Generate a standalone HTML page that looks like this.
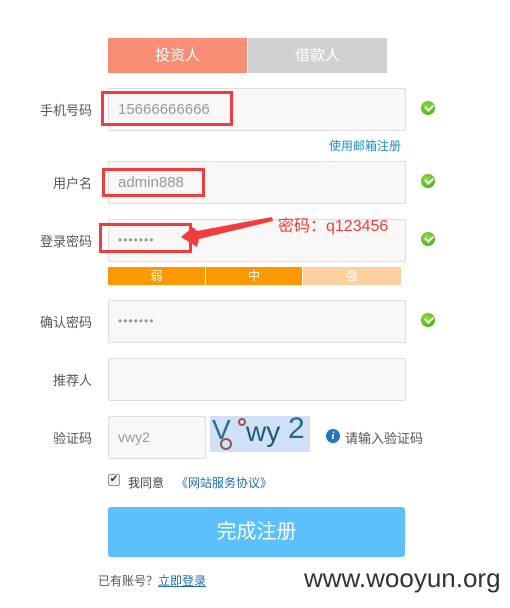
<!DOCTYPE html>
<html><head><meta charset="utf-8"><style>
*{margin:0;padding:0;box-sizing:border-box}
body{width:510px;height:608px;background:#fff;position:relative;overflow:hidden;font-family:"Liberation Sans","Noto Sans CJK SC",sans-serif;color:#555}
.a{position:absolute}
.tab{top:38px;height:35px;width:139px;color:#fff;font-size:15px;text-align:center;line-height:35px}
.lab{left:0;width:92px;text-align:right;font-size:13px;color:#555}
.inp{left:108px;width:298px;height:43px;background:#f9f8f6;border:1px solid #ddd;border-radius:2px;font-size:15px;color:#999;padding-left:9px;line-height:41px}
.rb{border:3px solid #f03c3c}
.ok{left:421px;width:14px;height:14px;border-radius:50%;background:radial-gradient(circle at 40% 35%,#8fdc3a,#3aa512);}
.ok:after{content:"";position:absolute;left:3.5px;top:3px;width:6px;height:3.5px;border-left:2px solid #fff;border-bottom:2px solid #fff;transform:rotate(-45deg)}
.bar{top:267px;height:18px;color:#fff;font-size:12px;text-align:center;line-height:18px}
</style></head><body>
<div class="a tab" style="left:108px;background:#f98e74">投资人</div>
<div class="a tab" style="left:248px;background:#d0d0d0">借款人</div>

<div class="a lab" style="top:100px">手机号码</div>
<div class="a inp" style="top:88px">15666666666</div>
<div class="a rb" style="left:101px;top:91px;width:132px;height:35px"></div>
<div class="a ok" style="top:101px"></div>
<div class="a" style="left:329px;top:137px;font-size:12px;color:#1a8fd1">使用邮箱注册</div>

<div class="a lab" style="top:173px">用户名</div>
<div class="a inp" style="top:161px">admin888</div>
<div class="a rb" style="left:102px;top:168px;width:103px;height:29px"></div>
<div class="a ok" style="top:174px"></div>

<div class="a lab" style="top:231px">登录密码</div>
<div class="a inp" style="top:219px;letter-spacing:1px;font-size:12px">•••••••</div>
<div class="a rb" style="left:99px;top:223px;width:93px;height:30px"></div>
<div class="a ok" style="top:232px"></div>
<svg class="a" style="left:0;top:0" width="510" height="608"><polygon points="272,217 273,221 199,239 197,247 181,237 193,227 197,231" fill="#f03c3c"/></svg>
<div class="a" style="left:278px;top:212px;font-size:16px;color:#f03c3c">密码：q123456</div>
<div class="a bar" style="left:108px;width:97px;background:#fe9800">弱</div>
<div class="a bar" style="left:206px;width:96px;background:#fe9800">中</div>
<div class="a bar" style="left:303px;width:98px;background:#fdd09e">强</div>

<div class="a lab" style="top:312px">确认密码</div>
<div class="a inp" style="top:300px;letter-spacing:1px;font-size:12px">•••••••</div>
<div class="a ok" style="top:313px"></div>

<div class="a lab" style="top:370px">推荐人</div>
<div class="a inp" style="top:358px"></div>

<div class="a lab" style="top:428px">验证码</div>
<div class="a inp" style="top:416px;width:98px;font-size:14px">vwy2</div>
<div class="a" style="left:210px;top:416px;width:100px;height:36px;background:#cfe0f7;overflow:hidden">
<div class="a" style="left:2px;top:-2px;font:28px 'Liberation Sans',sans-serif;color:#2e6f88">V</div>
<div class="a" style="left:36px;top:0px;font:28px 'Liberation Sans',sans-serif;color:#1f5a78">wy</div>
<div class="a" style="left:78px;top:-4px;font:30px 'Liberation Sans',sans-serif;color:#2a6d85">2</div>
<div class="a" style="left:10px;top:22px;width:12px;height:12px;border:2px solid #8a5a5a;border-radius:50%"></div>
<div class="a" style="left:28px;top:2px;width:8px;height:8px;border:2px solid #a05050;border-radius:50%"></div>
</div>
<div class="a" style="left:326px;top:429px;width:14px;height:14px;border-radius:50%;background:#1e78c8;color:#fff;font:italic bold 11px 'Liberation Serif',serif;text-align:center;line-height:14px">i</div>
<div class="a" style="left:345px;top:428px;font-size:13px;color:#555">请输入验证码</div>

<div class="a" style="left:108px;top:474px;width:12px;height:12px;border:1px solid #999;border-radius:2px;background:#eee;font-size:10px;line-height:10px;text-align:center;color:#333">✔</div>
<div class="a" style="left:128px;top:474px;font-size:12px;color:#444">我同意</div>
<div class="a" style="left:176px;top:474px;font-size:12px;color:#1a6fb5">《网站服务协议》</div>

<div class="a" style="left:108px;top:507px;width:297px;height:50px;background:#5bc0fd;border-radius:3px;color:#fff;font-size:20px;text-align:center;line-height:50px">完成注册</div>

<div class="a" style="left:98px;top:572px;font-size:12px;color:#555">已有账号？<span style="color:#1a6fb5;text-decoration:underline">立即登录</span></div>
<div class="a" style="left:304px;top:563px;font-size:26px;color:#333;font-family:'Liberation Sans',sans-serif">www.wooyun.org</div>
</body></html>
